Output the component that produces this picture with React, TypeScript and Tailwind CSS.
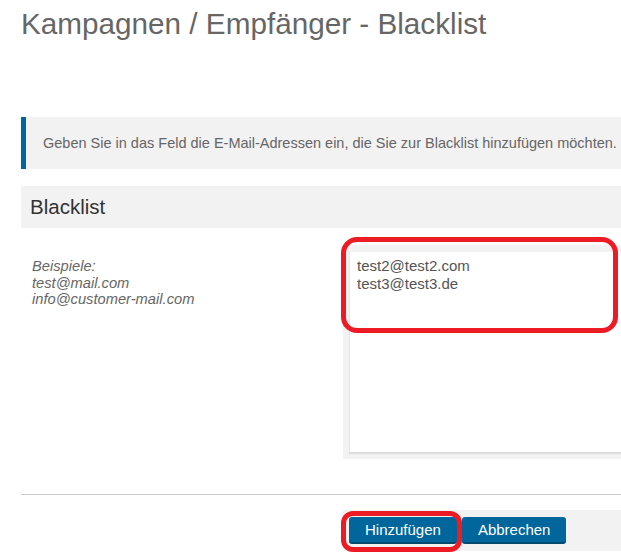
const Button = ({ label }: { label: string }) => (
  <button
    type="button"
    className="h-[27px] px-4 rounded-[3px] bg-[#00669c] border-b-2 border-[#004a70] text-white text-[15px] leading-[25px]"
  >
    {label}
  </button>
);

export default function App() {
  return (
    <div className="w-[621px] h-[557px] overflow-hidden bg-white font-['Liberation_Sans',Arial,sans-serif]">
      <div className="w-[680px] pl-[21px]">
        <h1 className="pt-[7px] text-[29.7px] leading-[34px] text-[#666] font-normal">
          Kampagnen / Empfänger - Blacklist
        </h1>

        <div className="mt-[76px] border-l-[5px] border-[#00669c] bg-[#f2f2f2] pl-[17px] py-4 text-[14.5px] leading-5 text-[#666] whitespace-nowrap">
          Geben Sie in das Feld die E-Mail-Adressen ein, die Sie zur Blacklist hinzufügen möchten.
        </div>

        <div className="mt-[17px] h-[42px] flex items-center pl-[9px] bg-[#f2f2f2] text-[20.5px] text-[#333]">
          Blacklist
        </div>

        <div className="flex">
          <div className="w-[322px] shrink-0 pl-[11px] pt-[30px] italic text-[14.7px] leading-[16.5px] text-[#666]">
            <div>Beispiele:</div>
            <div>test@mail.com</div>
            <div>info@customer-mail.com</div>
          </div>
          <div className="relative flex-1 pt-[17px]">
            <div className="bg-[#f2f2f2] pt-[7px] pl-[6px] pb-[5px]">
              <textarea
                readOnly
                defaultValue={"test2@test2.com\ntest3@test3.de"}
                className="block w-full h-[202px] resize-none bg-white border-b-2 border-[#dcdcdc] shadow-[inset_1px_0_0_#e6e6e6] pt-[5px] pl-[8px] text-[15px] leading-[17.5px] text-[#555] outline-none"
              />
            </div>
            {/* annotation ring */}
            <div className="absolute left-[-2px] top-[9px] w-[277px] h-[96px] rounded-[16px] border-[5px] border-[#ed1c24] pointer-events-none" />
          </div>
        </div>

        <div className="mt-[35px] border-t border-[#ccc]" />

        <div className="ml-[322px] mt-[15px] bg-[#f2f2f2] pt-[7px] pb-[7px] pl-[6px] flex gap-[5px]">
          <div className="relative">
            <Button label="Hinzufügen" />
            <div className="absolute left-[-8px] top-[-6px] w-[121px] h-[41px] rounded-[12px] border-[5px] border-[#ed1c24] pointer-events-none" />
          </div>
          <Button label="Abbrechen" />
        </div>
      </div>
    </div>
  );
}
